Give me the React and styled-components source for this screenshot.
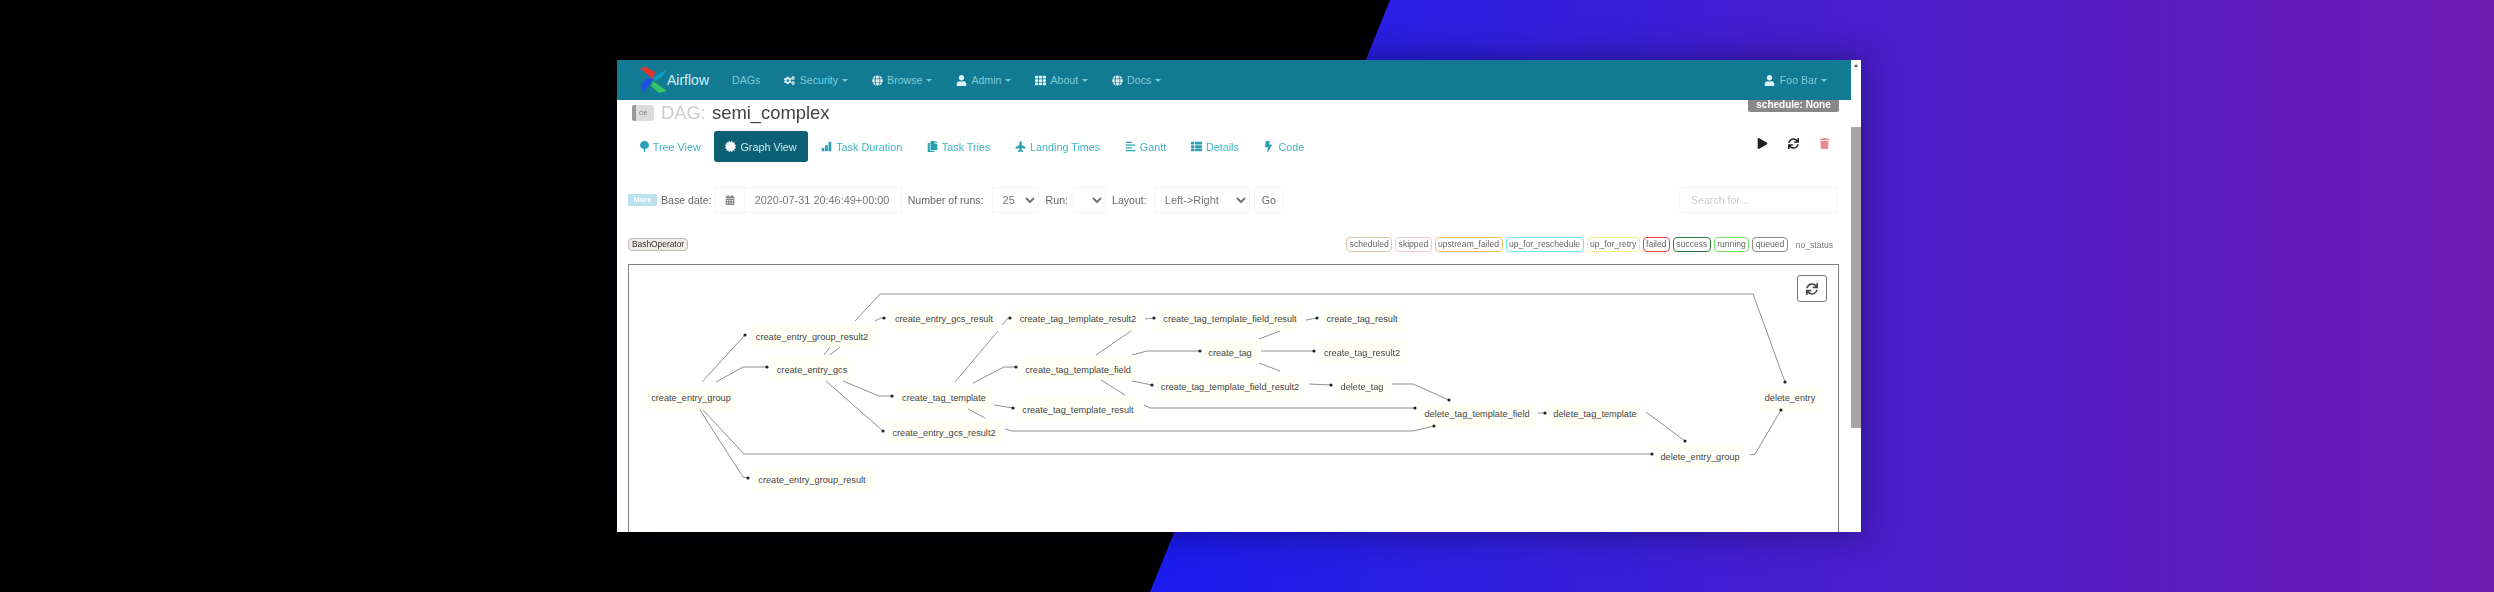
import React from 'react'
import styled, { createGlobalStyle } from 'styled-components'
import {
  FaCogs, FaGlobe, FaUser, FaTh, FaCertificate, FaCopy, FaPlane, FaAlignLeft, FaThList,
  FaBolt, FaPlay, FaSync, FaTrash, FaCalendarAlt,
} from 'react-icons/fa'
import { BsBarChartFill } from 'react-icons/bs'

const Global = createGlobalStyle`
  html, body { margin: 0; padding: 0; background: #000; overflow: hidden; }
  * { box-sizing: border-box; }
`

const Stage = styled.div`
  position: relative;
  width: 2494px;
  height: 592px;
  padding: 60px 0 0 617px;
  font-family: "Liberation Sans", Arial, sans-serif;
  background: linear-gradient(90deg, #1a1bf0 46%, #2a1fe4 56%, #451ecf 72%, #6e1ab2 100%);
  overflow: hidden;

  &::before {
    content: '';
    position: absolute;
    inset: 0;
    background: #000;
    clip-path: polygon(0 0, 1390px 0, 1150px 592px, 0 592px);
  }
`

const Window = styled.div`
  position: relative;
  display: flex;
  width: 1244px;
  height: 472px;
  background: #fff;
  box-shadow: 0 0 34px rgba(0, 0, 20, 0.45);
  overflow: hidden;
  filter: blur(0.6px);
`

const Main = styled.div`
  flex: 1;
  min-width: 0;
`

const Scrollbar = styled.div`
  width: 10px;
  padding-top: 4px;
  background: #fff;

  &::before {
    content: '';
    display: block;
    width: 0;
    height: 0;
    margin: 0 auto 60px;
    border-left: 2px solid transparent;
    border-right: 2px solid transparent;
    border-bottom: 3px solid #555;
  }
`

const Thumb = styled.div`
  height: 301px;
  background: #a9a5a5;
`

const Nav = styled.div`
  display: flex;
  align-items: center;
  height: 40px;
  padding: 0 24px 0 23px;
  background: #127b93;
  color: #7ccbdb;
  font-size: 10.6px;
`

const Brand = styled.div`
  display: flex;
  align-items: center;
  margin-right: 23px;
  color: #d2edf4;
  font-size: 14px;
`

const NavItem = styled.div`
  display: flex;
  align-items: center;
  gap: 4.5px;
  margin-right: 24px;

  &:last-child { margin: 0 0 0 auto; }
  svg { color: #dff3f7; font-size: 11px; }
`

const Caret = styled.span`
  width: 0;
  height: 0;
  margin-left: -1px;
  border-left: 3px solid transparent;
  border-right: 3px solid transparent;
  border-top: 3px solid currentColor;
`

const Content = styled.div`
  padding: 0 12px 0 11px;
`

const TitleRow = styled.div`
  display: flex;
  justify-content: space-between;
  height: 31px;
`

const Heading = styled.div`
  display: flex;
  align-items: center;
  height: 26px;
  padding-left: 4px;
  font-size: 18.4px;
  color: #444;

  span { color: #ccc; margin-right: 6px; }
`

const Toggle = styled.div`
  display: flex;
  align-items: center;
  justify-content: center;
  width: 22px;
  height: 16px;
  margin-right: 7px;
  border-radius: 2px;
  background: linear-gradient(90deg, #9a9a9a 20%, #dcdcdc 20%);
  color: #777;
  font-size: 6px;
`

const ScheduleBadge = styled.div`
  width: 91px;
  height: 12px;
  line-height: 9px;
  border-radius: 0 0 2px 2px;
  background: #888;
  color: #fff;
  font-size: 10px;
  font-weight: 700;
  text-align: center;
`

const Tabs = styled.div`
  display: flex;
  align-items: center;
  gap: 1px;
  height: 31px;
`

const Tab = styled.div`
  display: flex;
  align-items: center;
  gap: 4px;
  height: 31px;
  padding: 0 11.8px;
  border-radius: 3px;
  background: ${p => (p.$active ? '#0d5f74' : 'transparent')};
  color: ${p => (p.$active ? '#cdeaf0' : '#43b4c4')};
  font-size: 10.8px;

  svg { font-size: 11px; color: ${p => (p.$active ? '#fff' : '#2b9fb2')}; }
`

const Actions = styled.div`
  display: flex;
  align-items: center;
  gap: 20px;
  margin: -6px 9px 0 auto;
  font-size: 11px;
  color: #222;
`

const Trash = styled(FaTrash)`
  color: #e98a92;
`

const FormRow = styled.div`
  display: flex;
  align-items: center;
  height: 26px;
  margin-top: 25px;
  font-size: 10.6px;
  color: #666;
`

const MoreBadge = styled.div`
  width: 29px;
  height: 12px;
  line-height: 12px;
  border-radius: 2px;
  background: #b9e2f1;
  color: #fff;
  font-size: 7.5px;
  font-weight: 700;
  text-align: center;
`

const Label = styled.label`
  margin-left: ${p => p.$gap}px;
`

const Addon = styled.div`
  display: flex;
  align-items: center;
  justify-content: center;
  width: 30px;
  height: 26px;
  margin-left: 3px;
  border: 1px solid #f6f6f6;
  color: #888;
  font-size: 10px;
`

const DateInput = styled.input`
  width: 157px;
  height: 26px;
  padding: 0 0 0 10px;
  border: 1px solid #f6f6f6;
  border-left: 0;
  background: #fff;
  color: #777;
  font: 10.9px "Liberation Sans", Arial, sans-serif;
  outline: none;
`

const Select = styled.select`
  width: ${p => p.$w}px;
  height: 26px;
  margin-left: ${p => p.$gap}px;
  padding: 0 0 0 6px;
  border: 1px solid #f6f6f6;
  border-radius: 2px;
  background: #fff;
  color: #777;
  font: 11px "Liberation Sans", Arial, sans-serif;
`

const GoButton = styled.div`
  display: flex;
  align-items: center;
  justify-content: center;
  width: 30px;
  height: 26px;
  margin-left: 4px;
  border: 1px solid #f6f6f6;
  border-radius: 2px;
  color: #666;
`

const SearchInput = styled.input`
  width: 158px;
  height: 26px;
  margin: 0 2px 0 auto;
  padding: 0 0 0 11px;
  border: 1px solid #f6f6f6;
  border-radius: 2px;
  font: 10.6px "Liberation Sans", Arial, sans-serif;
  outline: none;

  &::placeholder { color: #ccc; }
`

const LegendRow = styled.div`
  display: flex;
  align-items: center;
  justify-content: space-between;
  height: 15px;
  margin-top: 24px;
`

const OperatorPill = styled.div`
  height: 13px;
  line-height: 11px;
  padding: 0 3px;
  border: 1px solid #b9b9b9;
  border-radius: 4px;
  background: #f0ede4;
  color: #333;
  font-size: 8.4px;
`

const Legend = styled.div`
  display: flex;
  align-items: center;
  gap: 3px;
`

const StatePill = styled.div`
  height: 15px;
  line-height: 12px;
  padding: 0 2.4px;
  border: 1.5px solid ${p => p.$color};
  border-radius: 4px;
  color: #666;
  font-size: 8.6px;
`

const NoStatus = styled.div`
  margin: 0 6px 0 5px;
  color: #777;
  font-size: 8.6px;
`

const GraphBox = styled.div`
  position: relative;
  height: 290px;
  margin-top: 12px;
  border: 1px solid #808080;
  border-top-width: 1.5px;
`

const RefreshButton = styled.div`
  position: absolute;
  top: 10px;
  right: 11px;
  display: flex;
  align-items: center;
  justify-content: center;
  width: 30px;
  height: 27px;
  border: 1.5px solid #777;
  border-radius: 3px;
  background: #fff;
  color: #444;
  font-size: 12px;
`

const GraphSvg = styled.svg`
  position: absolute;
  inset: 0;
`

// fixed size slot centred on the node's point, the label centres itself in it
const Node = styled.div`
  position: absolute;
  left: ${p => p.$x - 629 - 100}px;
  top: ${p => p.$y - 266 - 12}px;
  display: flex;
  align-items: center;
  justify-content: center;
  width: 200px;
  height: 24px;
`

const NodeLabel = styled.span`
  padding: 6px 5px;
  background: #fffff6;
  color: #444;
  font-size: 9.2px;
  line-height: 12px;
  white-space: nowrap;
`

const navItems = [
  { icon: <FaCogs />, label: 'Security' },
  { icon: <FaGlobe />, label: 'Browse' },
  { icon: <FaUser />, label: 'Admin' },
  { icon: <FaTh />, label: 'About' },
  { icon: <FaGlobe />, label: 'Docs' },
]

const TreeIcon = () => (
  <svg width="9" height="11" viewBox="0 0 9 11">
    <path d="M4.5 0C7 0 9 2 9 4.3 9 6.5 7 7.8 5.2 8v3H3.8V8C2 7.8 0 6.5 0 4.3 0 2 2 0 4.5 0z" fill="currentColor" />
  </svg>
)

const tabs = [
  { icon: <TreeIcon />, label: 'Tree View' },
  { icon: <FaCertificate />, label: 'Graph View', active: true },
  { icon: <BsBarChartFill />, label: 'Task Duration' },
  { icon: <FaCopy />, label: 'Task Tries' },
  { icon: <FaPlane style={{ transform: 'rotate(-90deg)' }} />, label: 'Landing Times' },
  { icon: <FaAlignLeft />, label: 'Gantt' },
  { icon: <FaThList />, label: 'Details' },
  { icon: <FaBolt />, label: 'Code' },
]

const states = [
  ['scheduled', '#d8c8a8'],
  ['skipped', '#f8c8d0'],
  ['upstream_failed', '#f5bd60'],
  ['up_for_reschedule', '#6fe3ea'],
  ['up_for_retry', '#f7ee80'],
  ['failed', '#e8403a'],
  ['success', '#2f7a3f'],
  ['running', '#74e06a'],
  ['queued', '#8a8a8a'],
]

const nodes = [
  ['create_entry_group', 691, 399],
  ['create_entry_group_result2', 812, 338],
  ['create_entry_gcs', 812, 371],
  ['create_entry_group_result', 812, 481],
  ['create_entry_gcs_result', 944, 320],
  ['create_tag_template', 944, 399],
  ['create_entry_gcs_result2', 944, 434],
  ['create_tag_template_result2', 1078, 320],
  ['create_tag_template_field', 1078, 371],
  ['create_tag_template_result', 1078, 411],
  ['create_tag_template_field_result', 1230, 320],
  ['create_tag', 1230, 354],
  ['create_tag_template_field_result2', 1230, 388],
  ['create_tag_result', 1362, 320],
  ['create_tag_result2', 1362, 354],
  ['delete_tag', 1362, 388],
  ['delete_tag_template_field', 1477, 415],
  ['delete_tag_template', 1595, 415],
  ['delete_entry_group', 1700, 458],
  ['delete_entry', 1790, 399],
]

// page coordinates, the svg viewBox does the shift
const edges = [
  [[702, 383], [745, 336]],
  [[716, 383], [743, 368], [767, 368]],
  [[703, 411], [744, 455], [1652, 455]],
  [[700, 411], [743, 478], [748, 479]],
  [[855, 322], [880, 295], [1753, 295], [1785, 383]],
  [[824, 356], [830, 348]],
  [[830, 356], [840, 348]],
  [[875, 322], [881, 319], [884, 319]],
  [[843, 382], [879, 397], [892, 397]],
  [[826, 382], [883, 432]],
  [[1002, 326], [1008, 319], [1010, 319]],
  [[955, 383], [998, 332]],
  [[973, 384], [1004, 368], [1016, 368]],
  [[994, 406], [1013, 409]],
  [[968, 410], [985, 419]],
  [[1005, 430], [1012, 432], [1413, 432], [1434, 427]],
  [[1145, 320], [1154, 319]],
  [[1096, 356], [1131, 332]],
  [[1132, 356], [1147, 352], [1200, 352]],
  [[1132, 382], [1152, 386]],
  [[1101, 381], [1125, 396]],
  [[1144, 406], [1150, 409], [1415, 409]],
  [[1306, 321], [1317, 319]],
  [[1259, 340], [1280, 332]],
  [[1261, 352], [1314, 352]],
  [[1259, 364], [1280, 372]],
  [[1309, 385], [1331, 386]],
  [[1392, 385], [1413, 385], [1449, 401]],
  [[1538, 414], [1545, 414]],
  [[1646, 413], [1685, 442]],
  [[1750, 456], [1755, 455], [1781, 411]],
]

const noHead = [5, 6, 11, 14, 17, 20, 23, 25]

const Logo = () => (
  <svg width="27" height="26" viewBox="0 0 27 26">
    <path d="M0 1 L6 0 L15 5 L13 12 Z" fill="#e8342f" />
    <path d="M13 11 L27 2 L22 10 L15 14 Z" fill="#0c9cc4" />
    <path d="M13 14 L27 24 L19 26 L11 19 Z" fill="#35c26b" />
    <path d="M13 12 L3 26 L1 18 L7 11 Z" fill="#1f4fe0" />
  </svg>
)

const App = () => {
  return (
    <Stage>
      <Global />
      <Window>
        <Main>
          <Nav>
            <Brand><Logo />Airflow</Brand>
            <NavItem>DAGs</NavItem>
            {navItems.map(item => (
              <NavItem key={item.label}>{item.icon}{item.label}<Caret /></NavItem>
            ))}
            <NavItem><FaUser />Foo Bar<Caret /></NavItem>
          </Nav>
          <Content>
            <TitleRow>
              <Heading><Toggle>Off</Toggle><span>DAG:</span>semi_complex</Heading>
              <ScheduleBadge>schedule: None</ScheduleBadge>
            </TitleRow>
            <Tabs>
              {tabs.map(tab => (
                <Tab key={tab.label} $active={tab.active}>{tab.icon}{tab.label}</Tab>
              ))}
              <Actions><FaPlay /><FaSync /><Trash /></Actions>
            </Tabs>
            <FormRow>
              <MoreBadge>More</MoreBadge>
              <Label $gap={4}>Base date:</Label>
              <Addon><FaCalendarAlt /></Addon>
              <DateInput readOnly value="2020-07-31 20:46:49+00:00" />
              <Label $gap={6}>Number of runs:</Label>
              <Select $w={47} $gap={8} defaultValue="25"><option>25</option></Select>
              <Label $gap={7}>Run:</Label>
              <Select $w={33} $gap={5}><option></option></Select>
              <Label $gap={6}>Layout:</Label>
              <Select $w={96} $gap={7} defaultValue="Left->Right"><option>{'Left->Right'}</option></Select>
              <GoButton>Go</GoButton>
              <SearchInput placeholder="Search for..." />
            </FormRow>
            <LegendRow>
              <OperatorPill>BashOperator</OperatorPill>
              <Legend>
                {states.map(([name, color]) => (
                  <StatePill key={name} $color={color}>{name}</StatePill>
                ))}
                <NoStatus>no_status</NoStatus>
              </Legend>
            </LegendRow>
            <GraphBox>
              {nodes.map(([name, x, y]) => (
                <Node key={name} $x={x} $y={y}><NodeLabel>{name}</NodeLabel></Node>
              ))}
              <GraphSvg width="1209" height="290" viewBox="629 266 1209 290">
                {edges.map((points, i) => {
                  const end = points[points.length - 1]
                  return (
                    <g key={i}>
                      <polyline points={points.join(' ')} fill="none" stroke="#8f8f8f" strokeWidth="1" />
                      {!noHead.includes(i) && <circle cx={end[0]} cy={end[1]} r="1.6" fill="#222" />}
                    </g>
                  )
                })}
              </GraphSvg>
              <RefreshButton><FaSync /></RefreshButton>
            </GraphBox>
          </Content>
        </Main>
        <Scrollbar><Thumb /></Scrollbar>
      </Window>
    </Stage>
  )
}

export default App
